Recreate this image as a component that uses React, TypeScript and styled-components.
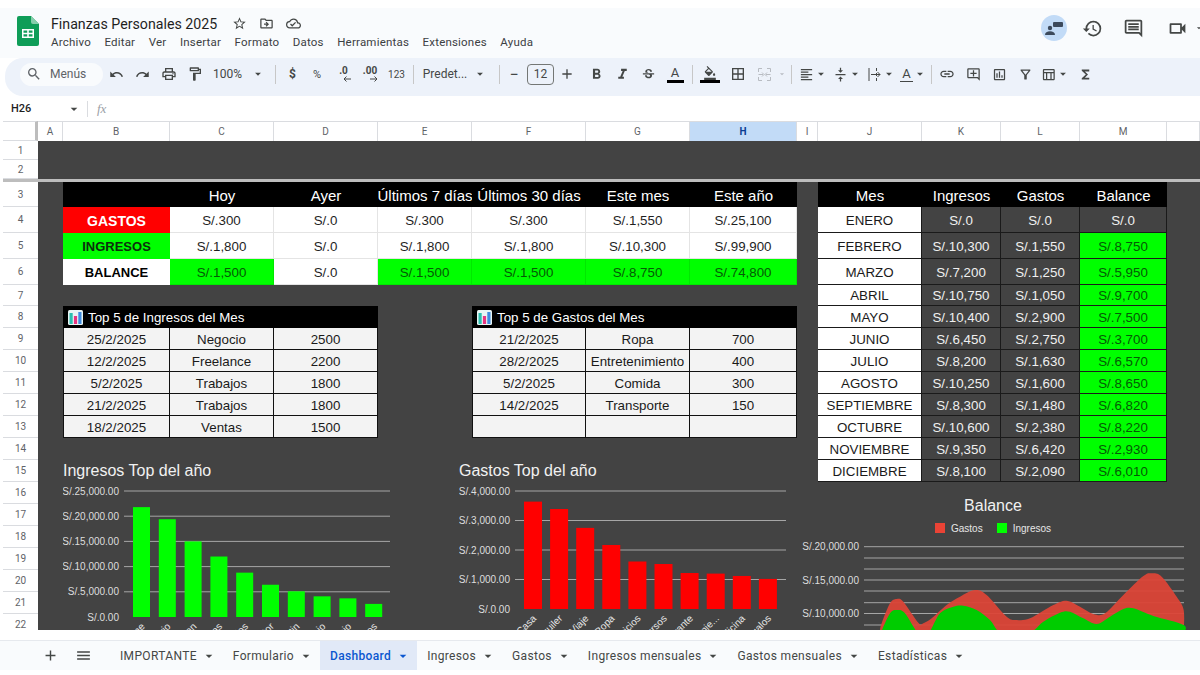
import React from "react";
import styled, { createGlobalStyle } from "styled-components";
import {
  MdAdd,
  MdArrowDropDown,
  MdBorderAll,
  MdFormatAlignLeft,
  MdFormatBold,
  MdFormatColorFill,
  MdFormatItalic,
  MdFunctions,
  MdHistory,
  MdLink,
  MdMenu,
  MdOutlineAddComment,
  MdOutlineCloudDone,
  MdOutlineComment,
  MdOutlineDriveFileMove,
  MdOutlineFilterAlt,
  MdOutlineFormatPaint,
  MdOutlineInsertChart,
  MdOutlineLocalPrintshop,
  MdOutlineStarBorder,
  MdOutlineTableChart,
  MdOutlineVideocam,
  MdRedo,
  MdSearch,
  MdStrikethroughS,
  MdUndo,
  MdVerticalAlignCenter,
} from "react-icons/md";

const GlobalStyle = createGlobalStyle`
  html, body { margin: 0; padding: 0; background: #fff; }
  * { box-sizing: border-box; }
`;

const UI_FONT = `Roboto, "Liberation Sans", sans-serif`;
const SHEET_FONT = `"Liberation Sans", Arial, sans-serif`;

const COLS = [35, 25, 107, 104, 104, 94, 114, 104, 107, 21, 104, 79, 79, 87, 33];
const COL_NAMES = ["A", "B", "C", "D", "E", "F", "G", "H", "I", "J", "K", "L", "M"];
const ROWS = [20, 19, 19, 3, 25, 26, 26, 26, 21, 22, 22, 22, 22, 22, 22, 22, 22, 22, 22, 22, 22, 22, 22, 22];
const rowLine = (n: number) => (n < 3 ? n + 1 : n + 2);

const summary = [
  ["S/.300", "S/.0", "S/.300", "S/.300", "S/.1,550", "S/.25,100"],
  ["S/.1,800", "S/.0", "S/.1,800", "S/.1,800", "S/.10,300", "S/.99,900"],
  ["S/.1,500", "S/.0", "S/.1,500", "S/.1,500", "S/.8,750", "S/.74,800"],
];
const topIngresos = [
  ["25/2/2025", "Negocio", "2500"],
  ["12/2/2025", "Freelance", "2200"],
  ["5/2/2025", "Trabajos", "1800"],
  ["21/2/2025", "Trabajos", "1800"],
  ["18/2/2025", "Ventas", "1500"],
];
const topGastos = [
  ["21/2/2025", "Ropa", "700"],
  ["28/2/2025", "Entretenimiento", "400"],
  ["5/2/2025", "Comida", "300"],
  ["14/2/2025", "Transporte", "150"],
  ["", "", ""],
];
const months = [
  ["ENERO", "S/.0", "S/.0", "S/.0"],
  ["FEBRERO", "S/.10,300", "S/.1,550", "S/.8,750"],
  ["MARZO", "S/.7,200", "S/.1,250", "S/.5,950"],
  ["ABRIL", "S/.10,750", "S/.1,050", "S/.9,700"],
  ["MAYO", "S/.10,400", "S/.2,900", "S/.7,500"],
  ["JUNIO", "S/.6,450", "S/.2,750", "S/.3,700"],
  ["JULIO", "S/.8,200", "S/.1,630", "S/.6,570"],
  ["AGOSTO", "S/.10,250", "S/.1,600", "S/.8,650"],
  ["SEPTIEMBRE", "S/.8,300", "S/.1,480", "S/.6,820"],
  ["OCTUBRE", "S/.10,600", "S/.2,380", "S/.8,220"],
  ["NOVIEMBRE", "S/.9,350", "S/.6,420", "S/.2,930"],
  ["DICIEMBRE", "S/.8,100", "S/.2,090", "S/.6,010"],
];

const Page = styled.div`
  width: 1200px;
  height: 675px;
  overflow: hidden;
  display: flex;
  flex-direction: column;
  padding-top: 8px;
  background: #fff;
  font-family: ${UI_FONT};
  color: #1f1f1f;
`;

const TitleBar = styled.header`
  height: 50px;
  flex: none;
  display: flex;
  align-items: flex-start;
  padding: 8px 0 0 17px;
  background: #f9fbfd;
`;
const Logo = styled.svg`
  flex: none;
  width: 22px;
  height: 30px;
  margin-right: 12px;
`;
const TitleGroup = styled.div`
  display: flex;
  flex-direction: column;
`;
const TitleRow = styled.div`
  display: flex;
  align-items: center;
  height: 15px;
  color: #444746;
`;
const DocName = styled.span`
  font-size: 14.2px;
  color: #1f1f1f;
  margin-right: 9px;
`;
const TitleIcon = styled.span`
  width: 27px;
  display: flex;
  justify-content: center;
  font-size: 15px;
`;
const MenuBar = styled.nav`
  display: flex;
  gap: 13.5px;
  margin-top: 4px;
  font-size: 11.5px;
  letter-spacing: 0.2px;
  color: #3c4043;
`;
const TitleActions = styled.div`
  margin-left: auto;
  margin-right: -4px;
  display: flex;
  align-items: center;
  height: 24px;
  color: #444746;
  font-size: 21px;
`;
const ActionBtn = styled.span<{ $w: number }>`
  width: ${(p) => p.$w}px;
  display: flex;
  justify-content: center;
  align-items: center;
`;
const Presence = styled.span`
  width: 26px;
  height: 26px;
  margin-right: 12px;
  border-radius: 50%;
  background: #c2dbf7;
  display: flex;
  align-items: center;
  justify-content: center;
`;

const Toolbar = styled.div`
  height: 38px;
  flex: none;
  display: flex;
  align-items: center;
  margin-left: 5px;
  padding: 0 0 6px 15px;
  background: #edf2fa;
  border-radius: 18px 0 0 18px;
  color: #444746;
`;
const SearchPill = styled.div`
  width: 83px;
  height: 23px;
  display: flex;
  align-items: center;
  gap: 8px;
  padding-left: 6px;
  border-radius: 12px;
  background: #f9fbfd;
  font-size: 12px;
  color: #5f6368;
`;
const ToolBtn = styled.div<{ $w: number; $muted?: boolean }>`
  width: ${(p) => p.$w}px;
  height: 24px;
  flex: none;
  display: flex;
  align-items: center;
  justify-content: center;
  font-size: 15px;
  color: ${(p) => (p.$muted ? "#b8bcc2" : "#444746")};
`;
const ToolText = styled.span<{ $size?: number; $bold?: boolean }>`
  font-size: ${(p) => p.$size ?? 12}px;
  font-weight: ${(p) => (p.$bold ? 700 : 400)};
  white-space: nowrap;
`;
const ToolSep = styled.span<{ $gap: number }>`
  width: 1px;
  height: 19px;
  flex: none;
  margin: 0 ${(p) => p.$gap}px;
  background: #c7c7c7;
`;
const SizeBox = styled.div`
  width: 27px;
  height: 21px;
  flex: none;
  margin-left: 5px;
  display: flex;
  align-items: center;
  justify-content: center;
  border: 1px solid #747775;
  border-radius: 4px;
  font-size: 12px;
`;
const Underlined = styled.span<{ $wide: number; $thin?: boolean }>`
  width: ${(p) => p.$wide}px;
  display: flex;
  flex-direction: column;
  align-items: center;
  font-size: 13px;
  line-height: 14px;
  border-bottom: ${(p) => (p.$thin ? 1 : 3)}px solid ${(p) => (p.$thin ? "#444746" : "#000")};
`;
const Decimal = styled.span`
  display: flex;
  flex-direction: column;
  align-items: center;
  font-size: 10px;
  line-height: 10px;
  font-weight: 700;
  svg {
    margin-left: 7px;
  }
`;

const FormulaBar = styled.div`
  height: 25px;
  flex: none;
  display: flex;
  align-items: center;
  padding-left: 11px;
  background: #fff;
  font-size: 11px;
  font-weight: 500;
  color: #1f1f1f;
`;
const CellRef = styled.span`
  width: 55px;
`;
const FormulaCaret = styled.span`
  width: 21px;
  display: flex;
  font-size: 16px;
  color: #444746;
`;
const FormulaSep = styled.span`
  width: 1px;
  height: 16px;
  background: #dadce0;
  margin-right: 9px;
`;
const Fx = styled.span`
  font-family: "Liberation Serif", serif;
  font-style: italic;
  font-size: 13px;
  font-weight: 400;
  color: #9aa0a6;
`;

const Sheet = styled.main`
  height: 509px;
  flex: none;
  overflow: hidden;
  margin-left: 3px;
  display: grid;
  grid-template-columns: ${COLS.map((c) => `${c}px`).join(" ")};
  grid-template-rows: ${ROWS.map((r) => `${r}px`).join(" ")};
  background: #fff;
`;
const Corner = styled.div`
  grid-column: 1;
  grid-row: 1;
  border-right: 3px solid #bdbdbd;
  border-top: 1px solid #dadce0;
  border-bottom: 1px solid #dadce0;
`;
const ColHead = styled.div<{ $line: number; $active?: boolean }>`
  grid-column: ${(p) => p.$line};
  grid-row: 1;
  display: flex;
  align-items: center;
  justify-content: center;
  font-size: 10px;
  font-weight: ${(p) => (p.$active ? 700 : 400)};
  color: ${(p) => (p.$active ? "#0b3d91" : "#5f6368")};
  background: ${(p) => (p.$active ? "#c2dbf7" : "#fff")};
  border-top: 1px solid #dadce0;
  border-right: 1px solid #dadce0;
`;
const RowHead = styled.div<{ $line: number }>`
  grid-column: 1;
  grid-row: ${(p) => p.$line};
  display: flex;
  align-items: center;
  justify-content: center;
  font-size: 10px;
  color: #5f6368;
  border-bottom: 1px solid #dadce0;
`;
const DarkCanvas = styled.div`
  grid-column: 2 / -1;
  grid-row: 2 / -1;
  background: #434343;
`;
const FreezeBar = styled.div`
  grid-column: 1 / -1;
  grid-row: 4;
  background: #bdbdbd;
  z-index: 1;
`;
const TableBlock = styled.section<{ $col: string; $row: string }>`
  grid-column: ${(p) => p.$col};
  grid-row: ${(p) => p.$row};
  display: grid;
  grid-template-columns: subgrid;
  grid-template-rows: subgrid;
  font-family: ${SHEET_FONT};
  font-size: 13.33px;
`;
const Cell = styled.div`
  display: flex;
  align-items: center;
  justify-content: center;
  padding-top: 1px;
  white-space: nowrap;
`;
const HeadCell = styled(Cell)`
  background: #000;
  color: #fff;
  font-size: 15px;
  overflow: hidden;
`;
const TitleCell = styled.div`
  grid-column: 1 / -1;
  background: #000;
  color: #fff;
  font-size: 13.33px;
  display: flex;
  align-items: center;
  gap: 5px;
  padding-left: 5px;
`;
const LabelCell = styled(Cell)<{ $bg: string; $fg: string; $size: number }>`
  background: ${(p) => p.$bg};
  color: ${(p) => p.$fg};
  font-size: ${(p) => p.$size}px;
  font-weight: 700;
`;
const ValueCell = styled(Cell)<{ $green?: boolean }>`
  background: ${(p) => (p.$green ? "#00ff00" : "#fff")};
  color: ${(p) => (p.$green ? "#055a05" : "#1f1f1f")};
  border-right: 1px solid ${(p) => (p.$green ? "#00e800" : "#e4e4e4")};
  border-bottom: 1px solid ${(p) => (p.$green ? "#00e800" : "#e4e4e4")};
`;
const TopCell = styled(Cell)`
  background: #f3f3f3;
  color: #1a1a1a;
  border-right: 1px solid #111;
  border-bottom: 1px solid #111;
  &:nth-child(3n + 2) {
    border-left: 1px solid #111;
  }
`;
const MonthCell = styled(Cell)<{ $kind: "name" | "dark" | "green" }>`
  background: ${(p) => (p.$kind === "name" ? "#fff" : p.$kind === "green" ? "#00ff00" : "#434343")};
  color: ${(p) => (p.$kind === "name" ? "#1a1a1a" : p.$kind === "green" ? "#055a05" : "#f0f0f0")};
  border-right: 1px solid #1a1a1a;
  border-bottom: 1px solid #1a1a1a;
`;

const ChartBlock = styled.figure<{ $col: string; $row: string; $indent?: number }>`
  grid-column: ${(p) => p.$col};
  grid-row: ${(p) => p.$row};
  margin: 0;
  padding-left: ${(p) => p.$indent ?? 0}px;
  font-family: ${SHEET_FONT};
  color: #fff;
  min-height: 0;
  svg {
    display: block;
  }
`;
const ChartTitle = styled.figcaption`
  height: 22px;
  line-height: 22px;
  font-size: 16px;
  color: #f1f1f1;
`;
const CenteredTitle = styled(ChartTitle)`
  margin-top: 13px;
  padding-right: 11px;
  text-align: center;
`;
const Legend = styled.div`
  height: 12px;
  margin-top: 5px;
  margin-bottom: 2px;
  padding-right: 11px;
  display: flex;
  align-items: center;
  justify-content: center;
  font-size: 10px;
  color: #e6e6e6;
`;
const LegendSwatch = styled.span<{ $color: string }>`
  width: 10px;
  height: 10px;
  margin: 0 6px 0 14px;
  background: ${(p) => p.$color};
  &:first-child {
    margin-left: 0;
  }
`;

const TabBar = styled.footer`
  height: 30px;
  flex: none;
  margin-top: 10px;
  display: flex;
  align-items: center;
  padding-left: 38px;
  background: #f9fbfd;
  border-top: 1px solid #e6e9ee;
  color: #444746;
  font-size: 12px;
  letter-spacing: 0.34px;
`;
const TabIcon = styled.span`
  width: 24px;
  display: flex;
  justify-content: center;
  margin-right: 9px;
  font-size: 17px;
`;
const TabList = styled.div`
  display: flex;
  margin-left: 6px;
  height: 100%;
`;
const Tab = styled.div<{ $active?: boolean }>`
  display: flex;
  align-items: center;
  padding: 0 6px 0 10px;
  white-space: nowrap;
  font-weight: ${(p) => (p.$active ? 500 : 400)};
  color: ${(p) => (p.$active ? "#0b57d0" : "#444746")};
  background: ${(p) => (p.$active ? "#e1e9f7" : "transparent")};
  svg {
    margin-left: 4px;
    font-size: 16px;
  }
`;

const Caret = () => <MdArrowDropDown size={14} />;

const SheetsLogo = () => (
  <Logo viewBox="0 0 22 30">
    <path d="M2 0h12l8 8v20a2 2 0 0 1-2 2H2a2 2 0 0 1-2-2V2a2 2 0 0 1 2-2z" fill="#0f9d58" />
    <path d="M14 0l8 8h-6a2 2 0 0 1-2-2z" fill="#87ceac" />
    <path d="M5 13h12v9H5z M6.5 14.5v2.2h3.7v-2.2z M11.8 14.5v2.2h3.7v-2.2z M6.5 18.3v2.2h3.7v-2.2z M11.8 18.3v2.2h3.7v-2.2z" fill="#fff" fillRule="evenodd" />
  </Logo>
);

const ChartEmoji = () => (
  <svg width="15" height="15" viewBox="0 0 15 15">
    <rect width="15" height="15" rx="1.5" fill="#e8f4f4" />
    <rect x="1.5" y="3" width="3.2" height="11" fill="#2bbfb0" />
    <rect x="5.9" y="6" width="3.2" height="8" fill="#e8347f" />
    <rect x="10.3" y="2" width="3.2" height="12" fill="#3d8be0" />
  </svg>
);

const PresenceIcon = () => (
  <svg width="18" height="14" viewBox="0 0 18 14" fill="#3c4a5c">
    <circle cx="5" cy="7" r="2.2" />
    <path d="M0 14c0-2.6 2.2-3.8 5-3.8s5 1.2 5 3.8z" />
    <rect x="8" y="1" width="10" height="5" rx="1" />
  </svg>
);

const MergeIcon = () => (
  <svg width="15" height="15" viewBox="0 0 15 15" fill="none" stroke="currentColor">
    <path d="M1.5 5V1.5H5M10 1.5h3.5V5M13.5 10v3.5H10M5 13.5H1.5V10" />
    <path d="M1.5 7.5H6M13.5 7.5H9M5 5.5l2 2-2 2M10 5.5l-2 2 2 2" />
  </svg>
);

const WrapIcon = () => (
  <svg width="15" height="15" viewBox="0 0 15 15" fill="none" stroke="currentColor">
    <path d="M2 1v13M9.5 1v3M9.5 6v3M9.5 11v3" />
    <path d="M4 7.5h9M10.5 5l2.5 2.5L10.5 10" />
  </svg>
);

const DecimalArrow = ({ left }: { left?: boolean }) => (
  <svg width="8" height="6" viewBox="0 0 8 6" fill="none" stroke="currentColor">
    <path d={left ? "M8 3H1M3.5 .5L1 3l2.5 2.5" : "M0 3h7M4.5 .5L7 3 4.5 5.5"} />
  </svg>
);

type Tool = { w: number; node?: React.ReactNode; caret?: boolean; muted?: boolean; sep?: number; size?: boolean };

const tools: Tool[] = [
  { w: 26, node: <MdUndo /> },
  { w: 26, node: <MdRedo /> },
  { w: 27, node: <MdOutlineLocalPrintshop size={16} /> },
  { w: 26, node: <MdOutlineFormatPaint size={16} /> },
  { w: 62, node: <ToolText>100%&nbsp;&nbsp;&nbsp;</ToolText>, caret: true },
  { w: 0, sep: 5 },
  { w: 23, node: <ToolText $bold>$</ToolText> },
  { w: 26, node: <ToolText $size={11}>%</ToolText> },
  { w: 27, node: <Decimal>.0<DecimalArrow left /></Decimal> },
  { w: 26, node: <Decimal>.00<DecimalArrow /></Decimal> },
  { w: 27, node: <ToolText $size={10}>123</ToolText> },
  { w: 0, sep: 3 },
  { w: 76, node: <ToolText>Predet...&nbsp;&nbsp;</ToolText>, caret: true },
  { w: 0, sep: 6 },
  { w: 16, node: <ToolText $size={16}>−</ToolText> },
  { w: 0, size: true },
  { w: 26, node: <MdAdd size={16} /> },
  { w: 3 },
  { w: 26, node: <MdFormatBold size={17} /> },
  { w: 26, node: <MdFormatItalic size={17} /> },
  { w: 27, node: <MdStrikethroughS /> },
  { w: 26, node: <Underlined $wide={17}>A</Underlined> },
  { w: 0, sep: 4 },
  { w: 26, node: <Underlined $wide={20}><MdFormatColorFill size={14} /></Underlined> },
  { w: 2 },
  { w: 26, node: <MdBorderAll size={16} /> },
  { w: 26, node: <MergeIcon />, muted: true },
  { w: 10, node: <Caret />, muted: true },
  { w: 0, sep: 4 },
  { w: 34, node: <MdFormatAlignLeft />, caret: true },
  { w: 34, node: <MdVerticalAlignCenter />, caret: true },
  { w: 34, node: <WrapIcon />, caret: true },
  { w: 31, node: <Underlined $wide={13} $thin>A</Underlined>, caret: true },
  { w: 0, sep: 2 },
  { w: 26, node: <MdLink size={16} /> },
  { w: 26, node: <MdOutlineAddComment /> },
  { w: 26, node: <MdOutlineInsertChart /> },
  { w: 26, node: <MdOutlineFilterAlt /> },
  { w: 34, node: <MdOutlineTableChart />, caret: true },
  { w: 26, node: <MdFunctions /> },
];

const menus = ["Archivo", "Editar", "Ver", "Insertar", "Formato", "Datos", "Herramientas", "Extensiones", "Ayuda"];
const tabs = ["IMPORTANTE", "Formulario", "Dashboard", "Ingresos", "Gastos", "Ingresos mensuales", "Gastos mensuales", "Estadísticas"];

type BarChartProps = {
  originX: number;
  width: number;
  labelEnd: number;
  lineFrom: number;
  lineTo: number;
  top: number;
  base: number;
  max: number;
  step: number;
  firstBar: number;
  barStep: number;
  barWidth: number;
  color: string;
  data: [string, number][];
};

const money = (v: number) => `S/.${v.toLocaleString("en-US")}.00`;

const BarChart = (c: BarChartProps) => {
  const ticks: number[] = [];
  for (let v = 0; v <= c.max; v += c.step) ticks.push(v);
  const y = (v: number) => c.base - (v / c.max) * (c.base - c.top);
  return (
    <svg width={c.width} height={150} viewBox={`${c.originX} 482 ${c.width} 150`}>
      {ticks.map((v) => (
        <g key={v}>
          {v > 0 && <line x1={c.lineFrom} x2={c.lineTo} y1={y(v)} y2={y(v)} stroke="#a6a6a6" />}
          <text x={c.labelEnd} y={y(v) + 3.5} textAnchor="end" fontSize="10" fill="#dedede">
            {money(v)}
          </text>
        </g>
      ))}
      {c.data.map(([label, v], i) => {
        const x = c.firstBar + i * c.barStep;
        const cx = x + c.barWidth / 2;
        return (
          <g key={label}>
            <rect x={x} y={y(v)} width={c.barWidth} height={c.base - y(v)} fill={c.color} />
            <text x={cx + 4} y={c.base + 10} textAnchor="end" fontSize="10" fill="#e6e6e6" transform={`rotate(-45 ${cx + 4} ${c.base + 10})`}>
              {label}
            </text>
          </g>
        );
      })}
    </svg>
  );
};

// puntos leidos del grafico, se suavizan con catmull-rom
const smooth = (pts: number[][]) => {
  let d = `M${pts[0][0]} ${pts[0][1]}`;
  for (let i = 0; i < pts.length - 1; i++) {
    const p0 = pts[i - 1] ?? pts[i];
    const p1 = pts[i];
    const p2 = pts[i + 1];
    const p3 = pts[i + 2] ?? p2;
    const c1x = p1[0] + (p2[0] - p0[0]) / 6;
    const c1y = p1[1] + (p2[1] - p0[1]) / 6;
    const c2x = p2[0] - (p3[0] - p1[0]) / 6;
    const c2y = p2[1] - (p3[1] - p1[1]) / 6;
    d += `C${c1x} ${c1y} ${c2x} ${c2y} ${p2[0]} ${p2[1]}`;
  }
  return d;
};

const toPage = (pts: number[][]) => pts.map(([x, y]) => [790 + x / 3, 470 + y / 3]);

const redArea = toPage([
  [270, 480], [275, 460], [300, 400], [320, 387], [340, 395], [385, 458], [400, 460], [425, 445], [470, 405], [510, 380],
  [555, 360], [590, 375], [650, 440], [680, 450], [720, 445], [790, 405], [830, 392], [870, 410], [910, 432], [945, 430],
  [1000, 375], [1060, 318], [1085, 310], [1115, 320], [1160, 380], [1181, 420], [1181, 490],
]);
const greenArea = toPage([
  [272, 490], [300, 430], [322, 420], [345, 430], [385, 490], [415, 490], [450, 430], [490, 410], [520, 407], [560, 420],
  [600, 450], [635, 490], [715, 490], [760, 455], [810, 428], [840, 425], [880, 445], [920, 462], [960, 440], [1000, 417],
  [1030, 415], [1090, 438], [1181, 465], [1181, 490],
]);
const balanceLines = [546.7, 558, 569, 580, 591, 602.7, 613.5, 625];
const balanceLabels: [number, string][] = [
  [546.7, "S/.20,000.00"],
  [580, "S/.15,000.00"],
  [613.5, "S/.10,000.00"],
];

const BalanceChart = () => (
  <svg width={403} height={100} viewBox="797 536 403 100">
    {balanceLines.map((y) => (
      <line key={y} x1={864} x2={1184} y1={y} y2={y} stroke="#a6a6a6" />
    ))}
    {balanceLabels.map(([y, t]) => (
      <text key={t} x={859} y={y + 3.5} textAnchor="end" fontSize="10" fill="#dedede">
        {t}
      </text>
    ))}
    <path d={`${smooth(redArea)}Z`} fill="#db4437" fillOpacity="0.95" />
    <path d={`${smooth(greenArea)}Z`} fill="#00cc00" />
  </svg>
);

export default function App() {
  return (
    <>
      <GlobalStyle />
      <Page>
        <TitleBar>
          <SheetsLogo />
          <TitleGroup>
            <TitleRow>
              <DocName>Finanzas Personales 2025</DocName>
              <TitleIcon><MdOutlineStarBorder /></TitleIcon>
              <TitleIcon><MdOutlineDriveFileMove /></TitleIcon>
              <TitleIcon><MdOutlineCloudDone /></TitleIcon>
            </TitleRow>
            <MenuBar>
              {menus.map((m) => (
                <span key={m}>{m}</span>
              ))}
            </MenuBar>
          </TitleGroup>
          <TitleActions>
            <Presence><PresenceIcon /></Presence>
            <ActionBtn $w={27}><MdHistory /></ActionBtn>
            <ActionBtn $w={54}><MdOutlineComment /></ActionBtn>
            <ActionBtn $w={34}><MdOutlineVideocam /></ActionBtn>
            <ActionBtn $w={10}><Caret /></ActionBtn>
          </TitleActions>
        </TitleBar>

        <Toolbar>
          <SearchPill>
            <MdSearch size={16} />
            Menús
          </SearchPill>
          {tools.map((t, i) => {
            if (t.sep !== undefined) return <ToolSep key={i} $gap={t.sep} />;
            if (t.size) return <SizeBox key={i}>12</SizeBox>;
            return (
              <ToolBtn key={i} $w={t.w} $muted={t.muted}>
                {t.node}
                {t.caret && <Caret />}
              </ToolBtn>
            );
          })}
        </Toolbar>

        <FormulaBar>
          <CellRef>H26</CellRef>
          <FormulaCaret><MdArrowDropDown /></FormulaCaret>
          <FormulaSep />
          <Fx>fx</Fx>
        </FormulaBar>

        <Sheet>
          <DarkCanvas />
          <Corner />
          {COL_NAMES.map((name, i) => (
            <ColHead key={name} $line={i + 2} $active={name === "H"}>
              {name}
            </ColHead>
          ))}
          <ColHead $line={15} />
          {Array.from({ length: 22 }, (_, i) => (
            <RowHead key={i} $line={rowLine(i + 1)}>
              {i + 1}
            </RowHead>
          ))}
          <FreezeBar />

          <TableBlock $col="3 / 10" $row={`${rowLine(3)} / ${rowLine(7)}`}>
            <HeadCell />
            {["Hoy", "Ayer", "Últimos 7 días", "Últimos 30 días", "Este mes", "Este año"].map((h) => (
              <HeadCell key={h}>{h}</HeadCell>
            ))}
            <LabelCell $bg="#ff0000" $fg="#fff" $size={14}>GASTOS</LabelCell>
            {summary[0].map((v, i) => <ValueCell key={i}>{v}</ValueCell>)}
            <LabelCell $bg="#00ff00" $fg="#0c2e0c" $size={13}>INGRESOS</LabelCell>
            {summary[1].map((v, i) => <ValueCell key={i}>{v}</ValueCell>)}
            <LabelCell $bg="#fff" $fg="#000" $size={13}>BALANCE</LabelCell>
            {summary[2].map((v, i) => <ValueCell key={i} $green={v !== "S/.0"}>{v}</ValueCell>)}
          </TableBlock>

          <TableBlock $col="3 / 6" $row={`${rowLine(8)} / ${rowLine(14)}`}>
            <TitleCell><ChartEmoji />Top 5 de Ingresos del Mes</TitleCell>
            {topIngresos.flat().map((v, i) => <TopCell key={i}>{v}</TopCell>)}
          </TableBlock>

          <TableBlock $col="7 / 10" $row={`${rowLine(8)} / ${rowLine(14)}`}>
            <TitleCell><ChartEmoji />Top 5 de Gastos del Mes</TitleCell>
            {topGastos.flat().map((v, i) => <TopCell key={i}>{v}</TopCell>)}
          </TableBlock>

          <TableBlock $col="11 / 15" $row={`${rowLine(3)} / ${rowLine(16)}`}>
            {["Mes", "Ingresos", "Gastos", "Balance"].map((h) => (
              <HeadCell key={h}>{h}</HeadCell>
            ))}
            {months.map((row) =>
              row.map((v, i) => (
                <MonthCell
                  key={row[0] + i}
                  $kind={i === 0 ? "name" : i === 3 && row[0] !== "ENERO" ? "green" : "dark"}
                >
                  {v}
                </MonthCell>
              ))
            )}
          </TableBlock>

          <ChartBlock $col="3 / 7" $row={`${rowLine(15)} / -1`}>
            <ChartTitle>Ingresos Top del año</ChartTitle>
            <BarChart
              originX={63}
              width={409}
              labelEnd={119}
              lineFrom={124}
              lineTo={390}
              top={491}
              base={617}
              max={25000}
              step={5000}
              firstBar={133}
              barStep={25.8}
              barWidth={17}
              color="#00ff00"
              data={[
                ["Negocio online", 21800],
                ["Salario", 19400],
                ["Inversión plan", 15000],
                ["Ventas", 12000],
                ["Trabajos", 8800],
                ["Consultor", 6400],
                ["Marketin", 5100],
                ["Alquiler io", 4100],
                ["Premio", 3700],
                ["Bonos", 2600],
              ]}
            />
          </ChartBlock>

          <ChartBlock $col="6 / 10" $row={`${rowLine(15)} / -1`} $indent={81}>
            <ChartTitle>Gastos Top del año</ChartTitle>
            <BarChart
              originX={459}
              width={338}
              labelEnd={510}
              lineFrom={515}
              lineTo={786}
              top={491}
              base={609}
              max={4000}
              step={1000}
              firstBar={524}
              barStep={26.1}
              barWidth={18}
              color="#ff0000"
              data={[
                ["Casa", 3640],
                ["Alquiler", 3390],
                ["Viaje", 2750],
                ["Ropa", 2170],
                ["Servicios", 1610],
                ["Cursos", 1525],
                ["Restaurante", 1220],
                ["Mantenimie...", 1200],
                ["Medicina", 1120],
                ["Regalos", 1020],
              ]}
            />
          </ChartBlock>

          <ChartBlock $col="10 / -1" $row={`${rowLine(16)} / -1`}>
            <CenteredTitle>Balance</CenteredTitle>
            <Legend>
              <LegendSwatch $color="#ea4335" />
              Gastos
              <LegendSwatch $color="#00ff00" />
              Ingresos
            </Legend>
            <BalanceChart />
          </ChartBlock>
        </Sheet>

        <TabBar>
          <TabIcon><MdAdd /></TabIcon>
          <TabIcon><MdMenu /></TabIcon>
          <TabList>
            {tabs.map((t) => (
              <Tab key={t} $active={t === "Dashboard"}>
                {t}
                <MdArrowDropDown />
              </Tab>
            ))}
          </TabList>
        </TabBar>
      </Page>
    </>
  );
}
